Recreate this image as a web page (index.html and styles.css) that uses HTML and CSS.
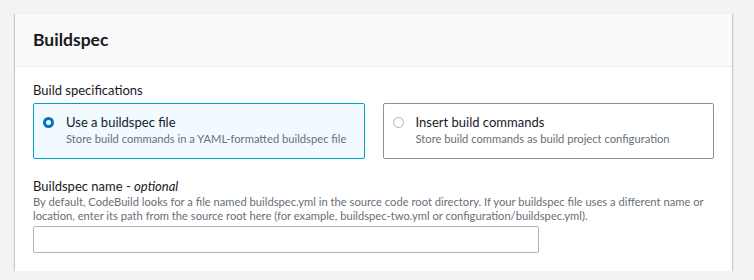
FILE: index.html
```html
<!DOCTYPE html>
<html lang="en">

<head>
    <meta charset="UTF-8">
    <meta name="viewport" content="width=device-width, initial-scale=1.0">
    <title>Buildspec</title>
    <link rel="stylesheet" href="styles.css">
</head>

<body>
    <div class="panel">
        <div class="panel-header">
            <h2>Buildspec</h2>
        </div>

        <div class="panel-body">
            <div class="field">
                <div class="field-label">Build specifications</div>
                <div class="tiles">
                    <label class="tile selected">
                        <span class="radio checked"></span>
                        <span class="tile-text">
                            <span class="tile-title">Use a buildspec file</span>
                            <span class="tile-desc">Store build commands in a YAML-formatted buildspec file</span>
                        </span>
                    </label>
                    <label class="tile">
                        <span class="radio"></span>
                        <span class="tile-text">
                            <span class="tile-title">Insert build commands</span>
                            <span class="tile-desc">Store build commands as build project configuration</span>
                        </span>
                    </label>
                </div>
            </div>

            <div class="field">
                <div class="field-label name-label">Buildspec name - <i>optional</i></div>
                <div class="field-desc">By default, CodeBuild looks for a file named buildspec.yml in the source code root directory. If your buildspec file uses a different name or location, enter its path from the source root here (for example, buildspec-two.yml or configuration/buildspec.yml).</div>
                <input type="text" class="text-input">
            </div>
        </div>
    </div>
</body>

</html>
```

FILE: styles.css
```css
* {
    margin: 0;
    padding: 0;
    box-sizing: border-box
}

body {
    font-family: Lato, 'Open Sans', Arial, sans-serif;
    background: #f2f3f3;
    color: #16191f;
    padding: 13px 22px 0 15px
}

.panel {
    background: #fff;
    border-top: 1px solid #eaeded;
    box-shadow: 0 1px 1px 0 rgba(0, 28, 36, .3), 1px 1px 1px 0 rgba(0, 28, 36, .15), -1px 1px 1px 0 rgba(0, 28, 36, .15)
}

.panel-header {
    background: #fafafa;
    border-bottom: 1px solid #eaeded;
    height: 53px;
    padding: 0 18px;
    display: flex;
    align-items: center
}

.panel-header h2 {
    font-size: 17.5px;
    font-weight: 700;
    line-height: 22px;
    margin-top: -1px
}

.panel-body {
    padding: 13px 18px 18px
}

.field-label {
    font-size: 13px;
    line-height: 20px;
    margin-bottom: 3px
}

.tiles {
    display: grid;
    grid-template-columns: 1fr 1fr;
    gap: 18px
}

.tile {
    display: flex;
    align-items: flex-start;
    gap: 12px;
    border: 1px solid #879596;
    border-radius: 2px;
    padding: 10px 9px 9px;
    height: 56px;
    cursor: pointer
}

.tile.selected {
    border-color: #00a1c9;
    background: #f1faff
}

.radio {
    flex: none;
    width: 11px;
    height: 11px;
    margin-top: 3px;
    border-radius: 50%;
    border: 1px solid #aab7b8;
    background: #fff
}

.radio.checked {
    border: 3px solid #0073bb
}

.tile-text {
    display: flex;
    flex-direction: column
}

.tile-title {
    font-size: 13px;
    line-height: 17px
}

.tile-desc {
    font-size: 11.2px;
    line-height: 16px;
    color: #687078
}

.field + .field {
    margin-top: 18px
}

.name-label {
    line-height: 18px;
    margin-bottom: 0
}

.field-desc {
    font-size: 11.2px;
    line-height: 14px;
    color: #687078
}

.text-input {
    display: block;
    width: 506px;
    height: 27px;
    margin-top: 3px;
    border: 1px solid #aab7b8;
    border-radius: 2px;
    background: #fff
}
```
